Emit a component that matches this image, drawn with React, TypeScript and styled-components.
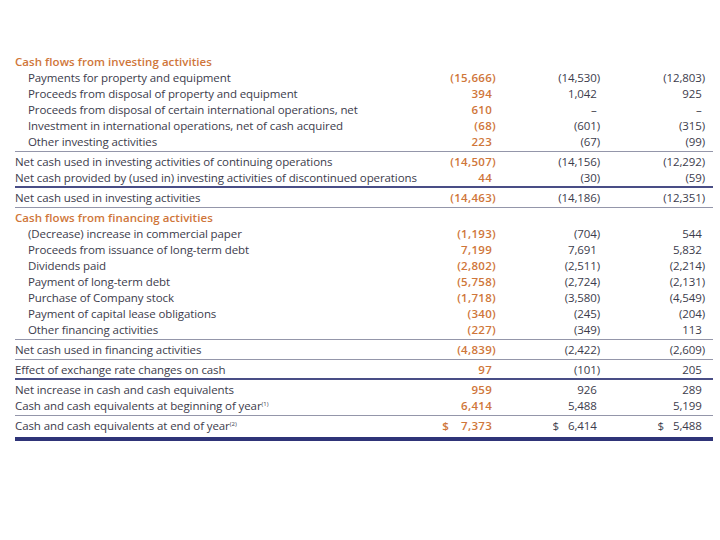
import React from "react";
import styled, { createGlobalStyle } from "styled-components";

const GlobalStyle = createGlobalStyle`
  html, body { margin: 0; padding: 0; background: #ffffff; }
  body { font-family: "Open Sans", "Noto Sans", Arial, sans-serif; }
`;

const ORANGE = "#cf763a";
const TEXT = "#3c3c4c";
const NAVY = "#2f3478";
const GRAY = "#9496aa";

type Kind = "header" | "item" | "total";
type RowEntry = {
  type: "row";
  kind: Kind;
  label: string;
  sup?: string;
  values?: [string, string, string];
  dollar?: boolean;
};
type SepEntry = { type: "sep"; tone: "gray" | "navy" };
type Entry = RowEntry | SepEntry;

const data: Entry[] = [
  { type: "row", kind: "header", label: "Cash flows from investing activities" },
  { type: "row", kind: "item", label: "Payments for property and equipment", values: ["(15,666)", "(14,530)", "(12,803)"] },
  { type: "row", kind: "item", label: "Proceeds from disposal of property and equipment", values: ["394", "1,042", "925"] },
  { type: "row", kind: "item", label: "Proceeds from disposal of certain international operations, net", values: ["610", "–", "–"] },
  { type: "row", kind: "item", label: "Investment in international operations, net of cash acquired", values: ["(68)", "(601)", "(315)"] },
  { type: "row", kind: "item", label: "Other investing activities", values: ["223", "(67)", "(99)"] },
  { type: "sep", tone: "gray" },
  { type: "row", kind: "total", label: "Net cash used in investing activities of continuing operations", values: ["(14,507)", "(14,156)", "(12,292)"] },
  { type: "row", kind: "total", label: "Net cash provided by (used in) investing activities of discontinued operations", values: ["44", "(30)", "(59)"] },
  { type: "sep", tone: "navy" },
  { type: "row", kind: "total", label: "Net cash used in investing activities", values: ["(14,463)", "(14,186)", "(12,351)"] },
  { type: "sep", tone: "gray" },
  { type: "row", kind: "header", label: "Cash flows from financing activities" },
  { type: "row", kind: "item", label: "(Decrease) increase in commercial paper", values: ["(1,193)", "(704)", "544"] },
  { type: "row", kind: "item", label: "Proceeds from issuance of long-term debt", values: ["7,199", "7,691", "5,832"] },
  { type: "row", kind: "item", label: "Dividends paid", values: ["(2,802)", "(2,511)", "(2,214)"] },
  { type: "row", kind: "item", label: "Payment of long-term debt", values: ["(5,758)", "(2,724)", "(2,131)"] },
  { type: "row", kind: "item", label: "Purchase of Company stock", values: ["(1,718)", "(3,580)", "(4,549)"] },
  { type: "row", kind: "item", label: "Payment of capital lease obligations", values: ["(340)", "(245)", "(204)"] },
  { type: "row", kind: "item", label: "Other financing activities", values: ["(227)", "(349)", "113"] },
  { type: "sep", tone: "gray" },
  { type: "row", kind: "total", label: "Net cash used in financing activities", values: ["(4,839)", "(2,422)", "(2,609)"] },
  { type: "sep", tone: "gray" },
  { type: "row", kind: "total", label: "Effect of exchange rate changes on cash", values: ["97", "(101)", "205"] },
  { type: "sep", tone: "navy" },
  { type: "row", kind: "total", label: "Net increase in cash and cash equivalents", values: ["959", "926", "289"] },
  { type: "row", kind: "total", label: "Cash and cash equivalents at beginning of year", sup: "(1)", values: ["6,414", "5,488", "5,199"] },
  { type: "sep", tone: "gray" },
  { type: "row", kind: "total", label: "Cash and cash equivalents at end of year", sup: "(2)", values: ["$7,373", "$6,414", "$5,488"], dollar: true },
];

const Page = styled.div`
  padding: 53px 7px 0 15px;
  width: 720px;
  box-sizing: border-box;
  color: ${TEXT};
  font-size: 11.5px;
`;

const Table = styled.div`
  display: flex;
  flex-direction: column;
`;

const Row = styled.div`
  display: grid;
  grid-template-columns: minmax(0, 1fr) 104px 104px 105px;
  padding-right: 8px;
  height: 16px;
  align-items: center;
  white-space: nowrap;
`;

const Label = styled.div<{ $kind: Kind }>`
  padding-left: ${(p) => (p.$kind === "item" ? "13px" : "0")};
  color: ${(p) => (p.$kind === "header" ? ORANGE : TEXT)};
  font-weight: ${(p) => (p.$kind === "header" ? 600 : 400)};
  letter-spacing: ${(p) => (p.$kind === "header" ? "0.05px" : "-0.1px")};
  overflow: visible;
`;

const Sup = styled.sup`
  font-size: 6px;
  vertical-align: 4px;
  line-height: 0;
  letter-spacing: 0;
`;

const Num = styled.div<{ $primary: boolean }>`
  text-align: right;
  color: ${(p) => (p.$primary ? ORANGE : TEXT)};
  font-weight: ${(p) => (p.$primary ? 600 : 400)};
  letter-spacing: ${(p) => (p.$primary ? "0.3px" : "-0.1px")};
`;

const Hidden = styled.span`
  visibility: hidden;
`;

const Dollar = styled.span<{ $gap: number }>`
  margin-right: ${(p) => p.$gap}px;
`;

const Sep = styled.div<{ $tone: "gray" | "navy" }>`
  height: 4px;
  display: flex;
  align-items: center;

  &::before {
    content: "";
    display: block;
    width: 100%;
    height: ${(p) => (p.$tone === "navy" ? "2px" : "1px")};
    background: ${(p) => (p.$tone === "navy" ? "#494e86" : GRAY)};
  }
`;

const BottomRule = styled.div`
  margin-top: 4px;
  height: 4px;
  background: ${NAVY};
`;

function formatValue(v: string, primary: boolean, dollar?: boolean) {
  let s = v;
  let hasDollar = false;
  if (dollar && s.startsWith("$")) {
    hasDollar = true;
    s = s.slice(1);
  }
  const neg = s.endsWith(")");
  return (
    <>
      {hasDollar && <Dollar $gap={primary ? 12 : 9}>$</Dollar>}
      {s}
      {!neg && <Hidden>)</Hidden>}
    </>
  );
}

export default function App() {
  return (
    <>
      <GlobalStyle />
      <Page>
        <Table>
          {data.map((e, i) =>
            e.type === "sep" ? (
              <Sep key={i} $tone={e.tone} />
            ) : (
              <Row key={i}>
                <Label $kind={e.kind}>
                  {e.label}
                  {e.sup && <Sup>{e.sup}</Sup>}
                </Label>
                {e.values?.map((v, j) => (
                  <Num key={j} $primary={j === 0}>
                    {formatValue(v, j === 0, e.dollar)}
                  </Num>
                ))}
              </Row>
            )
          )}
          <BottomRule />
        </Table>
      </Page>
    </>
  );
}
